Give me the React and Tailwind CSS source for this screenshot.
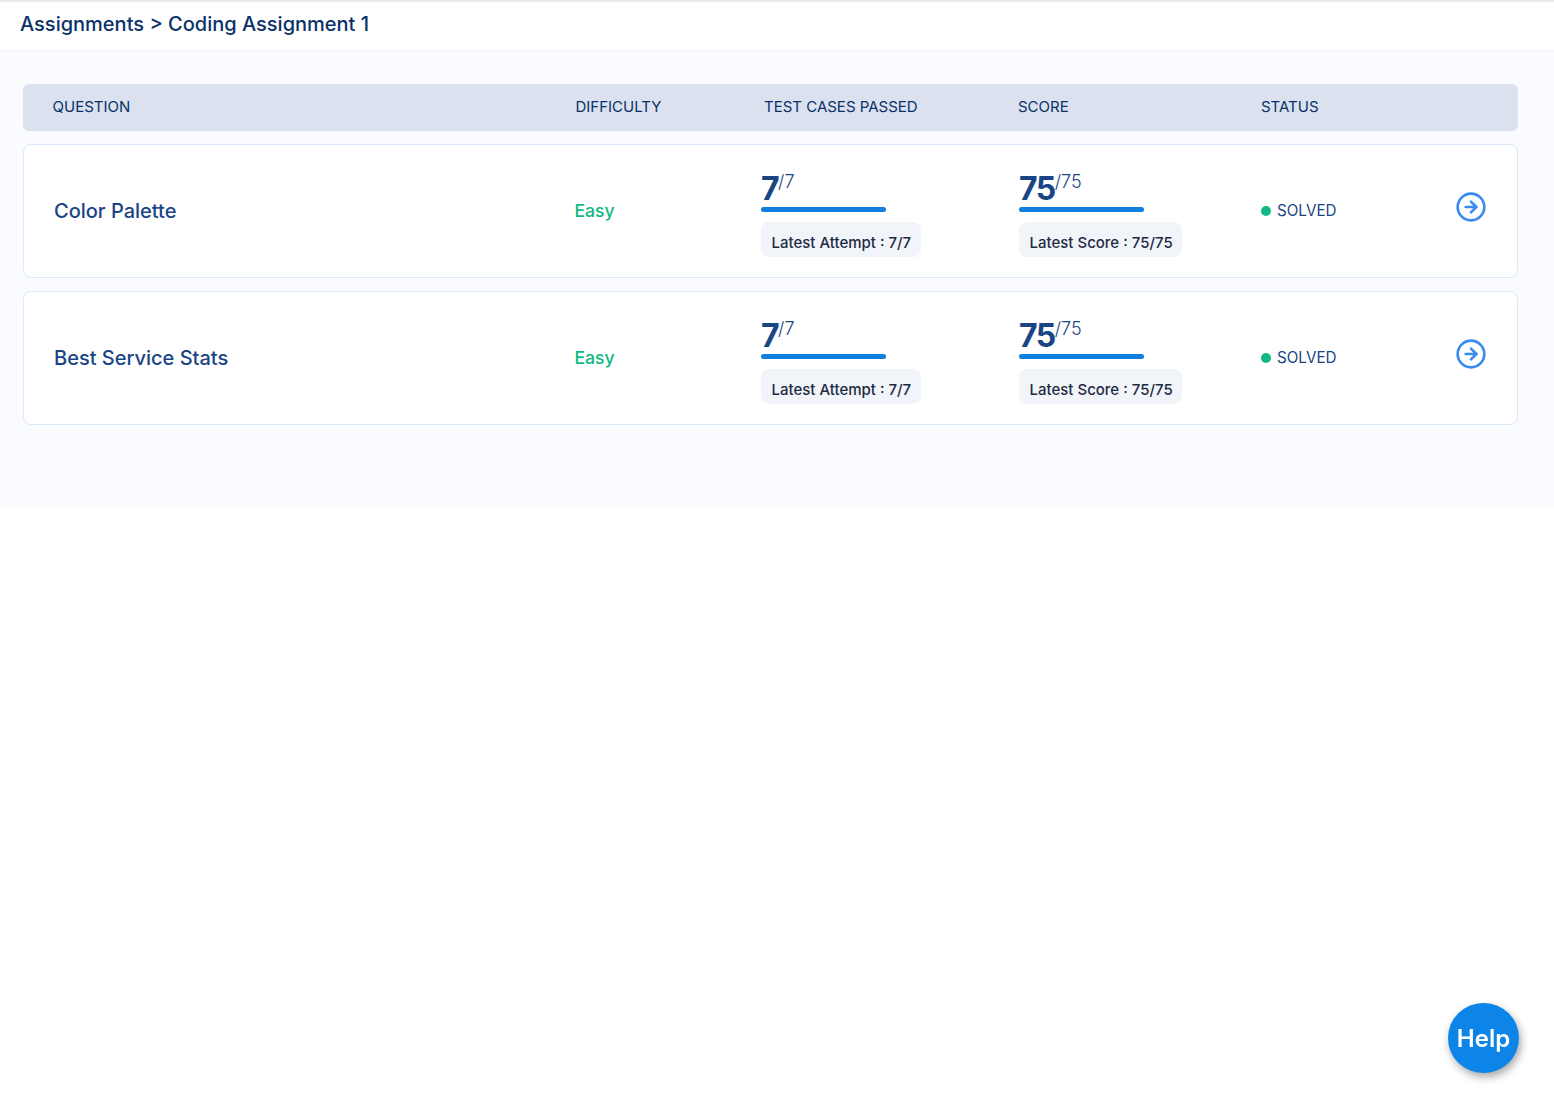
import { CircleArrowRight } from "lucide-react";

const rows = [
  { id: 1, name: "Color Palette" },
  { id: 2, name: "Best Service Stats" },
];

function Progress({ value, total, label }) {
  return (
    <div className="flex flex-col items-start">
      <div className="flex h-[37px] items-start text-[#1a4585]">
        <span className="mt-[7px] text-[32px] leading-[34px] font-bold tracking-[-1.5px]">{value}</span>
        <span className="mt-[6px] text-[18px] leading-[22px] font-light">/{total}</span>
      </div>
      <div className="mt-[5px] h-[5px] w-[125px] rounded-full bg-[#0f7fe0]"></div>
      <div className="mt-[10px] rounded-lg bg-[#f1f4f9] pt-[12px] pr-[9.5px] pb-[6px] pl-[10.5px] text-[15px] leading-[17px] font-medium text-[#1f2a44]">
        {label} : {value}/{total}
      </div>
    </div>
  );
}

function AssignmentRow({ name }) {
  return (
    <div className="flex h-[134px] items-center rounded-lg border border-[#dbe8f8] bg-white pl-[30px]">
      <div className="w-[520.5px] text-[20px] font-medium text-[#1a4585]">{name}</div>
      <div className="w-[186.5px] text-[17.6px] font-medium text-[#10b981]">Easy</div>
      <div className="w-[258px]">
        <Progress value={7} total={7} label="Latest Attempt" />
      </div>
      <div className="w-[242px]">
        <Progress value={75} total={75} label="Latest Score" />
      </div>
      <div className="flex w-[195px] items-center gap-[6px] text-[15.2px] text-[#1a4585]">
        <span className="h-[10px] w-[10px] rounded-full bg-[#10b981]"></span>
        SOLVED
      </div>
      <CircleArrowRight size={32} strokeWidth={2} className="mb-[9px] -ml-[1px] text-[#3b8af0]" />
    </div>
  );
}

export default function App() {
  return (
    <div className="min-h-[1103px] bg-white font-['Inter',sans-serif]">
      <div className="relative flex h-[50px] items-start border-t-2 border-[#e8eaee] bg-white pl-[20px] shadow-[0_1px_2px_rgba(0,0,0,0.05)]">
        <h1 className="mt-[9px] text-[20px] leading-[26px] font-medium text-[#0a3168]">
          Assignments &gt; Coding Assignment 1
        </h1>
      </div>
      <div className="flex h-[456px] flex-col gap-[13px] bg-[#f9fbff] pt-[34px] pr-[36px] pl-[23px]">
        <div className="flex h-[47px] items-center rounded-md bg-[#dbe1ef] pl-[29.5px] text-[15px] font-normal text-[#0a3168]">
          <div className="w-[523px]">QUESTION</div>
          <div className="w-[188.5px]">DIFFICULTY</div>
          <div className="w-[254px]">TEST CASES PASSED</div>
          <div className="w-[243px]">SCORE</div>
          <div>STATUS</div>
        </div>
        {rows.map((row) => (
          <AssignmentRow key={row.id} name={row.name} />
        ))}
      </div>
      <button className="fixed right-[35px] bottom-[30px] h-[70px] w-[71px] rounded-full bg-[#0d84e8] pt-[1px] text-[24px] font-semibold text-white shadow-[2px_4px_8px_rgba(0,0,0,0.35)]">
        Help
      </button>
    </div>
  );
}
